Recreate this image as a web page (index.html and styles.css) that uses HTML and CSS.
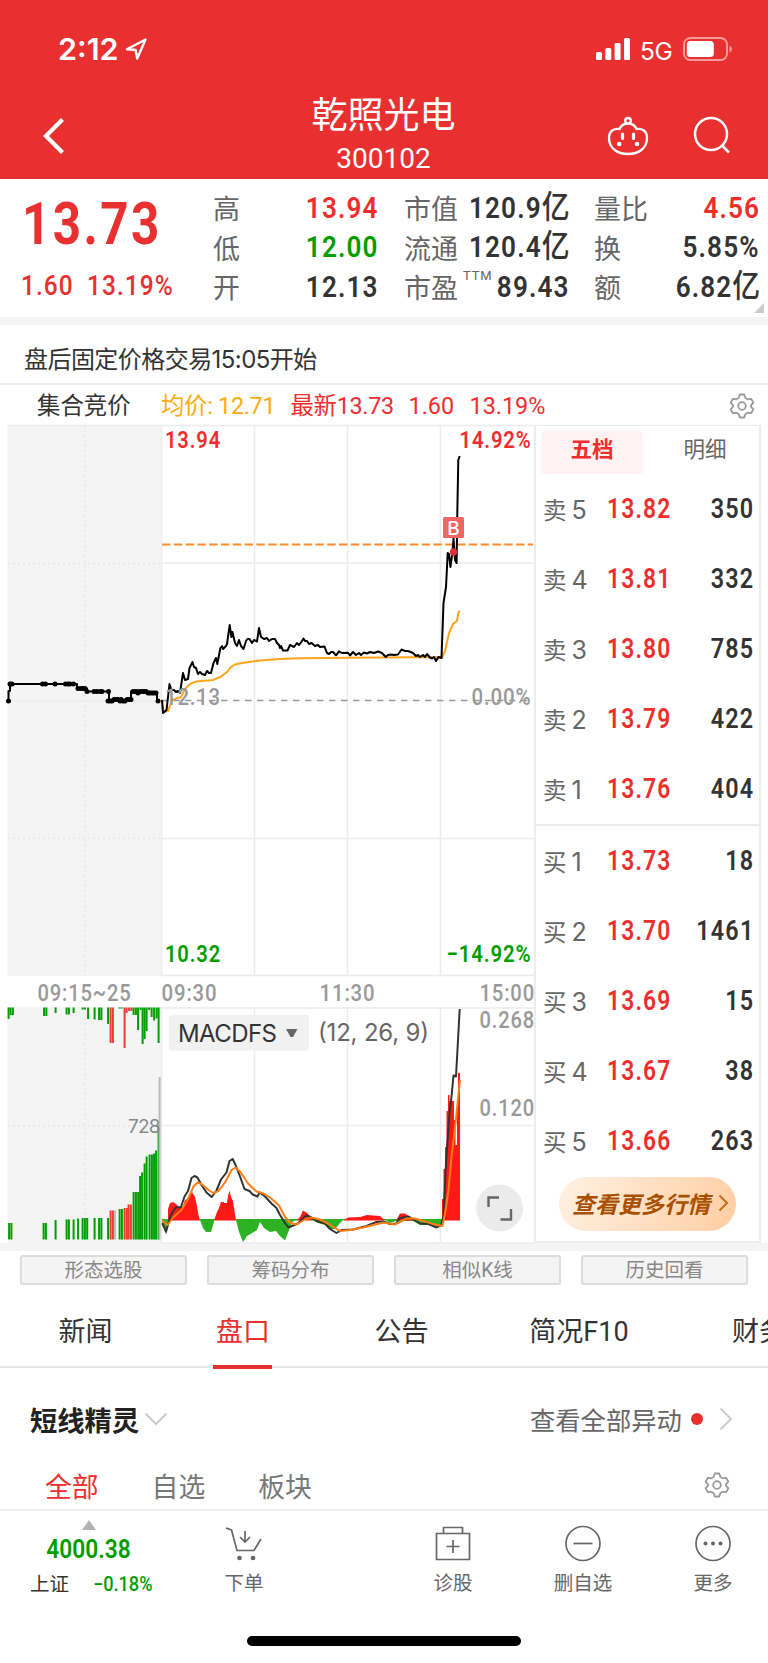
FILE: index.html
```html
<!DOCTYPE html>
<html lang="zh-CN">
<head>
  <meta charset="UTF-8">
  <title>乾照光电 300102</title>
  <link rel="stylesheet" href="styles.css">
</head>
<body>
  <!-- Header -->
  <header class="header">
    <div class="status-bar">
      <div class="status-left">
        <span class="clock">2:12</span>
        <svg width="22" height="22" viewBox="0 0 22 22"><path d="M20.500 1.500L2 11.200L10.700 12L12.200 20.500Z" fill="none" stroke="#fff" stroke-width="2.400" stroke-linejoin="round"/></svg>
      </div>
      <div class="status-right">
        <svg width="35" height="22" viewBox="0 0 35 22" fill="#fff"><rect x="0" y="14" width="6" height="8" rx="1.5"/><rect x="9.3" y="10" width="6" height="12" rx="1.5"/><rect x="18.6" y="5" width="6" height="17" rx="1.5"/><rect x="28" y="0" width="6" height="22" rx="1.5"/></svg>
        <span class="network">5G</span>
        <svg width="50" height="24" viewBox="0 0 50 24"><rect x="1" y="1" width="43" height="22" rx="6.5" fill="none" stroke="#f59a9a" stroke-width="2"/><rect x="3.8" y="4" width="27" height="16" rx="3.5" fill="#fff"/><path d="M46.5 8.5Q49 9.5 49 12T46.5 15.5Z" fill="#f59a9a"/></svg>
      </div>
    </div>
    <div class="nav-bar">
      <svg class="back" width="22" height="36" viewBox="0 0 22 36"><path d="M19.500 1.500L3 18L19.500 34.500" fill="none" stroke="#fff" stroke-width="4.200"/></svg>
      <div class="stock-title">
        <h1>乾照光电</h1>
        <p>300102</p>
      </div>
      <div class="nav-icons">
        <svg width="42" height="40" viewBox="0 0 42 40" fill="none" stroke="#fff" stroke-width="2.300">
          <circle cx="21" cy="4.800" r="2.800"/>
          <path d="M21 7.500C17 7.500 14 9.500 12.500 13C7 12 2 15 2 22C2 32 10 38 21 38S40 32 40 22C40 15 35 12 29.500 13C28 9.500 25 7.500 21 7.500Z"/>
          <path d="M15.500 18V22.500M26.500 18V22.500" stroke-width="3.200" stroke-linecap="round"/>
          <g fill="#fff" stroke="none"><circle cx="12.200" cy="28" r="2.300"/><circle cx="30" cy="28" r="2.300"/></g>
        </svg>
        <svg width="38" height="38" viewBox="0 0 38 38" fill="none" stroke="#fff" stroke-width="2.500"><circle cx="18" cy="18" r="16"/><path d="M28.500 29L36 36.500"/></svg>
      </div>
    </div>
  </header>

  <!-- Quote summary -->
  <section class="quote">
    <div class="quote-main">
      <div class="last-price"><span>13.73</span></div>
      <div class="change"><span>1.60</span><span>13.19%</span></div>
    </div>
    <dl class="stats stats-a">
      <div><dt>高</dt><dd class="up">13.94</dd></div>
      <div><dt>低</dt><dd class="down">12.00</dd></div>
      <div><dt>开</dt><dd>12.13</dd></div>
    </dl>
    <dl class="stats stats-b">
      <div><dt>市值</dt><dd>120.9<i>亿</i></dd></div>
      <div><dt>流通</dt><dd>120.4<i>亿</i></dd></div>
      <div><dt>市盈<sup>TTM</sup></dt><dd>89.43</dd></div>
    </dl>
    <dl class="stats stats-c">
      <div><dt>量比</dt><dd class="up">4.56</dd></div>
      <div><dt>换</dt><dd>5.85%</dd></div>
      <div><dt>额</dt><dd>6.82<i>亿</i></dd></div>
    </dl>
    <div class="corner"></div>
  </section>
  <div class="notice">盘后固定价格交易15:05开始</div>

  <!-- Chart legend -->
  <div class="legend">
    <span class="auction">集合竞价</span>
    <span class="avg">均价: 12.71</span>
    <span class="latest">最新13.73</span>
    <span class="diff">1.60</span>
    <span class="pct">13.19%</span>
    <svg class="gear" width="26" height="26" viewBox="0 0 26 26"><use href="#gear"/></svg>
  </div>

  <!-- Charts and order book -->
  <main class="trade">
    <svg class="chart" width="534" height="819" viewBox="0 425 534 819">
      <rect x="7.500" y="425" width="153.500" height="551" fill="#f4f4f4"/>
      <rect x="7.500" y="1007" width="153.500" height="237" fill="#f4f4f4"/>
      <g class="grid">
        <path d="M7.500 425.500H534M161 563H534M161 838.500H534M161 975.500H534M161 1008H534M161 1125.500H534M161 1243H534"/>
        <path d="M161.500 425V976M254.500 425V976M347.500 425V976M440.500 425V976M161.500 1008V1243M254.500 1008V1243M347.500 1008V1243M440.500 1008V1243"/>
        <path class="dotted" d="M85 425V976M85 1008V1243M8 563.500H161M8 838.500H161M8 1126H161"/>
        <path d="M8 701H161"/>
      </g>

      <!-- Auction bars, filled in by script.js -->
      <g id="auctionBars"></g>
      <g id="auctionDots"></g>
      <path class="auction-line" d="M8.500 701V691H10V684H77V688.500H87V691.500H109V701H114L118 699.500L125 701L131 699.500V691.500H147L157 693V701"/>

      <!-- Intraday price -->
      <path d="M162 544.500H533" stroke="#ff8a2b" stroke-width="2.200" stroke-dasharray="8.500 3.300"/>
      <path d="M161 700.500H533" stroke="#999" stroke-width="1.300" stroke-dasharray="6.500 5.500"/>
      <polyline class="avg-line" points="162,700 163.500,712 168,711 172,700 181,697 185,689 190,684 196,681.500 213,680 220,677 227,672 231,667 235,664.500 242,663 260,660.500 280,659 300,658.300 350,657.800 440,657 442,657.500 445,651 449,633 453,624 457,621 458.500,612 460,611"/>
      <polyline class="price-line" points="162,700 163,713 166.500,710 169.500,684 171.500,690 174,690 176,692 178,691 180,693 183,673 185,680 188,679 189.500,668 192.500,662 194,667 196,668 198,674 200,672 202,674 205,675 207,671 209,673 211,673 213.500,663 216,658 217.300,664 220.400,648 222,646 223,649 226,646 227,644 229.700,625 231.400,637 232.400,632 235,643 237,646 239,640 241,646 243.500,649 246,641 247.500,639 249.500,639 252,643 254,640 257,641.500 259,628 261,637 264,639 267,638 269,641 272,639 275,639 277,643 279,645 280,648 281,646 283,650.500 287.500,650.500 290,645 292,646 294,647 297,643 299,645 302,641 303.500,638.500 305,641 307,641 309,644 311.600,643 315,646 318,645 320,647 324.500,646.500 327,653 329,654 331,652 333,652 336,655.300 339,651.300 342,653 348,652.700 350,655.500 353,652 356,655 359,653 361,655 364,652.500 367,653.500 370,652 374,653 378,651.500 382,653 385.700,657 388,655 391,654.500 394,655 398,654.500 401.500,649.500 405,651 408,651 413,653 416,656 418,655 420,657 423,655 425,657 427,654 430,657.500 432,658.500 434,657 436,661 438.500,657 441.500,658 443.500,603 446,587 447.700,553 449,554 450.400,567 452.500,552 453.500,538 455,560 456.600,563 457.300,513 458.300,460 459.700,456"/>
      <rect x="443" y="517" width="21" height="21" rx="1.500" fill="#f06464"/>
      <text x="453.500" y="535" class="mark" text-anchor="middle">B</text>
      <circle cx="453.500" cy="552" r="3.700" fill="#e02e3a"/>

      <g class="axis up">
        <text x="165" y="448" textLength="56" lengthAdjust="spacingAndGlyphs">13.94</text>
        <text x="459.500" y="448" textLength="72" lengthAdjust="spacingAndGlyphs">14.92%</text>
      </g>
      <g class="axis down">
        <text x="165" y="961.500" textLength="56" lengthAdjust="spacingAndGlyphs">10.32</text>
        <text x="446.500" y="961.500" textLength="85" lengthAdjust="spacingAndGlyphs">−14.92%</text>
      </g>
      <g class="axis muted">
        <text x="165" y="705" textLength="56" lengthAdjust="spacingAndGlyphs">12.13</text>
        <text x="471.500" y="705" textLength="60" lengthAdjust="spacingAndGlyphs">0.00%</text>
        <text x="37.500" y="1001" textLength="94" lengthAdjust="spacingAndGlyphs">09:15~25</text>
        <text x="161.500" y="1001" textLength="56" lengthAdjust="spacingAndGlyphs">09:30</text>
        <text x="319.500" y="1001" textLength="56" lengthAdjust="spacingAndGlyphs">11:30</text>
        <text x="479.500" y="1001" textLength="55.500" lengthAdjust="spacingAndGlyphs">15:00</text>
        <text x="479.500" y="1027.500" textLength="55.500" lengthAdjust="spacingAndGlyphs">0.268</text>
        <text x="479.500" y="1116" textLength="55.500" lengthAdjust="spacingAndGlyphs">0.120</text>
      </g>
      <text x="128" y="1133" class="volume-label">728</text>

      <!-- MACD -->
      <path fill="#2db224" d="M162 1220L166 1235L168 1225L170 1220H200L203 1228L206 1232H211L214 1222V1220H236L239 1232L243 1242L247 1236L252 1233L257 1230L260 1222L264 1228L270 1232L276 1231L280 1236L285 1240.500L289 1230L292 1222L297 1220H312L318 1223L325 1225L330 1229H335L340 1223L343 1220H385L390 1223L396 1221H413L420 1225H430L438 1228L442 1226V1219H162Z"/>
      <path fill="#ff1a17" d="M168 1220.500V1209L170 1203L173 1202L176 1204L180 1208L183 1206L185 1200L187 1199L192 1192L195 1197L197 1206L198 1213L200 1220.500ZM214 1220.500L217 1212L219 1208L221 1202H224V1203H227L228 1196L229.500 1190.500L231 1197L233 1201L235 1214L236 1220.500ZM296 1220.500L300 1217L303 1210.500L307 1213L311 1217L313 1220.500ZM343 1220.500L348 1217.500L360 1217L367 1215L380 1216L385 1220.500ZM396 1220.500L400 1213.500H405L410 1217L413 1220.500ZM442 1220.500V1199H443.500V1169H445V1147H446.500V1111H448V1095H449.500V1101H454V1120H455.500V1145H457V1097H458V1073H460V1220.500Z"/>
      <polyline class="dif" points="162.300,1223 166,1231.700 168.500,1223 171,1215 175.500,1207.500 181,1207 184.500,1196.500 188,1191 191.500,1178 194.500,1176 197.500,1177.500 201.500,1185 206.500,1192.500 211.700,1197 216.500,1190.500 221,1179.500 226.500,1172.500 229.500,1161 232.700,1159 235.500,1165 239.500,1175 244.500,1189 249.500,1191 252.700,1194.500 257.500,1196.500 259.500,1192.500 265,1196.500 271.500,1203.500 276.500,1208 280,1215 285,1223 288.500,1227.500 292,1226 298,1223.500 303.500,1217.500 306.500,1215.500 311.500,1217.500 316.500,1221 325,1223.500 330,1229 336.500,1233 341.500,1230 353,1229.500 366.500,1226 376.500,1222 383.500,1221.500 390,1224 396,1223.500 400,1218 408,1216.500 413.500,1219.500 420,1223.500 428.500,1224 436.500,1227.500 441,1225 443.500,1216.500 446,1163 449.500,1113 451.500,1096.500 453.500,1075.500 456,1076.500 457.300,1053 459.700,1009"/>
      <polyline class="dea" points="162.300,1220.500 167.500,1225 173.500,1217 181.500,1210 187.500,1200 193.500,1186.500 197.500,1182.500 201.500,1184 208.500,1190 213.500,1193 218.500,1191 225,1182.500 231.500,1170 235.500,1167.500 240,1171.500 248.500,1184 256.500,1191.500 263.500,1193.500 270,1197.500 279,1205.500 285,1217 290.500,1223 296.500,1224.500 305,1219.500 311.500,1217.500 320,1219.500 328,1223.500 340,1231 350,1230 363,1227.500 383.500,1222.500 395,1224.500 406.500,1218.500 415,1218.500 428.500,1222.500 436.500,1225 442.500,1226 445,1213.500 448.500,1190 451.500,1156.500 455.500,1123.500 458.500,1093.500 460,1080"/>
      <rect x="169" y="1015" width="140" height="35.500" rx="3" fill="#f1f1f1"/>
      <text x="178" y="1042" class="indicator" textLength="99">MACDFS</text>
      <path d="M286 1029H297.500L293 1037H290.500Z" fill="#666"/>
      <text x="318" y="1041" class="indicator params" textLength="111">(12, 26, 9)</text>
      <circle cx="499.500" cy="1208" r="23.500" fill="#ebebeb"/>
      <path d="M488.500 1207V1197.500H499M500.500 1219.500H511V1209" fill="none" stroke="#666" stroke-width="2.400"/>
    </svg>

    <aside class="book">
      <div class="book-tabs"><span class="active">五档</span><span>明细</span></div>
      <ul class="asks">
        <li><span>卖<b>5</b></span><em>13.82</em><strong>350</strong></li>
        <li><span>卖<b>4</b></span><em>13.81</em><strong>332</strong></li>
        <li><span>卖<b>3</b></span><em>13.80</em><strong>785</strong></li>
        <li><span>卖<b>2</b></span><em>13.79</em><strong>422</strong></li>
        <li><span>卖<b>1</b></span><em>13.76</em><strong>404</strong></li>
      </ul>
      <ul class="bids">
        <li><span>买<b>1</b></span><em>13.73</em><strong>18</strong></li>
        <li><span>买<b>2</b></span><em>13.70</em><strong>1461</strong></li>
        <li><span>买<b>3</b></span><em>13.69</em><strong>15</strong></li>
        <li><span>买<b>4</b></span><em>13.67</em><strong>38</strong></li>
        <li><span>买<b>5</b></span><em>13.66</em><strong>263</strong></li>
      </ul>
      <div class="more-quotes">
        <span>查看更多行情</span>
        <svg width="11" height="18" viewBox="0 0 11 18"><path d="M1.500 1.500L9 9L1.500 16.500" fill="none" stroke="#c0701f" stroke-width="2"/></svg>
      </div>
    </aside>
  </main>

  <!-- Tools -->
  <div class="tools">
    <span>形态选股</span><span>筹码分布</span><span>相似K线</span><span>历史回看</span>
  </div>

  <nav class="tabs">
    <span>新闻</span><span class="active">盘口</span><span>公告</span><span>简况F10</span><span>财务</span>
  </nav>

  <section class="alerts">
    <div class="alerts-head">
      <h2>短线精灵</h2>
      <svg width="24" height="14" viewBox="0 0 24 14"><path d="M1.500 1.500L12 12L22.500 1.500" fill="none" stroke="#ccc" stroke-width="2"/></svg>
      <span class="view-all">查看全部异动</span>
      <i class="dot"></i>
      <svg width="14" height="24" viewBox="0 0 14 24"><path d="M1.500 1.500L12 12L1.500 22.500" fill="none" stroke="#ccc" stroke-width="2"/></svg>
    </div>
    <div class="filters">
      <span class="active">全部</span><span>自选</span><span>板块</span>
      <svg class="gear" width="26" height="26" viewBox="0 0 26 26">
        <g id="gear" fill="none" stroke="#999" stroke-width="1.800" stroke-linejoin="round">
          <path d="M10.800 1.500H15.200L16.400 5Q17.500 5.600 18.600 6.300L22.100 5.800L24.300 9.600L22 12.300V13.700L24.300 16.400L22.100 20.200L18.600 19.700Q17.500 20.400 16.400 21L15.200 24.500H10.800L9.600 21Q8.500 20.400 7.400 19.700L3.900 20.200L1.700 16.400L4 13.700V12.300L1.700 9.600L3.900 5.800L7.400 6.300Q8.500 5.600 9.600 5Z"/>
          <circle cx="13" cy="13" r="3.800"/>
        </g>
      </svg>
    </div>
  </section>

  <!-- Bottom bar -->
  <footer class="bottom-bar">
    <div class="index">
      <i class="arrow-up"></i>
      <div class="index-value">4000.38</div>
      <div class="index-row"><span>上证</span><span class="down">−0.18%</span></div>
    </div>
    <div class="action order">
      <svg width="38" height="38" viewBox="0 0 38 38"><path d="M1 3L6.500 5L12 25.500H29L36 14M20 6V16M15 12L20 17L25 12"/><g fill="#666" stroke="none"><circle cx="14.500" cy="33" r="2.300"/><circle cx="28" cy="33" r="2.300"/></g></svg>
      <span>下单</span>
    </div>
    <div class="action diagnose">
      <svg width="38" height="38" viewBox="0 0 38 38"><path d="M2.500 8.500H35.500V34.500H2.500ZM9.500 8.500V2.500H28.500V8.500M19 15V28M12.500 21.500H25.500"/></svg>
      <span>诊股</span>
    </div>
    <div class="action remove">
      <svg width="38" height="38" viewBox="0 0 38 38"><circle cx="19" cy="18.500" r="17"/><path d="M9.500 18.500H28.500"/></svg>
      <span>删自选</span>
    </div>
    <div class="action more">
      <svg width="38" height="38" viewBox="0 0 38 38"><circle cx="19" cy="18.500" r="17"/><g fill="#666" stroke="none"><circle cx="11.500" cy="18.500" r="2"/><circle cx="19" cy="18.500" r="2"/><circle cx="26.500" cy="18.500" r="2"/></g></svg>
      <span>更多</span>
    </div>
  </footer>
  <div class="home-indicator"></div>
  <script src="script.js"></script>
</body>
</html>
```

FILE: styles.css
```css
/* Global Settings */
* { margin: 0; padding: 0; box-sizing: border-box; }
body {
  width: 768px;
  height: 1663px;
  overflow: hidden;
  background: #fff;
  color: #333;
  font-family: Roboto, "Noto Sans CJK SC", sans-serif;
}
svg { display: block; flex-shrink: 0; }
ul { list-style: none; }
i, em { font-style: normal; }
.up { color: #f02d2d; fill: #f02d2d; }
.down { color: #009d00; fill: #009d00; }

/* ----------------- Header ----------------- */
.header {
  height: 179px;
  background: #e93030;
  color: #fff;
}
.status-bar {
  height: 98px;
  padding: 0 35px 0 58px;
  display: flex;
  align-items: center;
  justify-content: space-between;
}
.status-left, .status-right { display: flex; align-items: center; }
.status-left { gap: 5px; }
.clock { font: 600 30.5px/36px Inter, sans-serif; width: 62px; }
.network { font: 400 24.5px/30px Inter, sans-serif; width: 32px; margin: 3px 11px 0 9px; letter-spacing: -0.5px; }
.nav-bar {
  height: 81px;
  padding: 0 37px 0 43px;
  display: grid;
  grid-template-columns: 117px 1fr 124px;
}
.back { margin-top: 20px; }
.stock-title { text-align: center; }
.stock-title h1 { font-size: 36px; font-weight: 400; line-height: 36px; }
.stock-title p { font-size: 28px; line-height: 32px; margin-top: 9px; }
.nav-icons { display: flex; justify-content: space-between; padding-top: 18px; }

/* ----------------- Quote ----------------- */
.quote {
  position: relative;
  height: 146px;
  border-bottom: 8px solid #f4f4f4;
  display: flex;
  padding-top: 8px;
}
.quote-main { width: 213px; color: #e93030; }
.last-price {
  height: 81px;
  padding: 7px 0 0 22px;
  font-size: 59px;
  font-weight: 700;
  line-height: 60px;
  letter-spacing: 3px;
}
.last-price span { display: inline-block; transform: scaleX(0.835); transform-origin: left; }
.change {
  display: flex;
  gap: 7px;
  padding-left: 21px;
  font-size: 27.5px;
  font-weight: 500;
  line-height: 36px;
  letter-spacing: 1.2px;
}
.change span { transform: scaleX(0.89); transform-origin: left; }
.stats div {
  height: 39.5px;
  display: flex;
  justify-content: space-between;
  align-items: center;
}
.stats dt { position: relative; top: 1px; font-size: 27px; color: #666; white-space: nowrap; }
.stats dd {
  position: relative;
  top: 0.5px;
  margin-right: -1px;
  font-size: 30px;
  font-weight: 600;
  letter-spacing: 1.3px;
  white-space: nowrap;
  transform: scaleX(0.87);
  transform-origin: right;
}
/* no room to spare beside the label in the middle column */
.stats-b dd { margin-left: -14px; }
.stats dd i { font-size: 32px; font-weight: 500; line-height: 30px; letter-spacing: 0; }
.stats sup { position: absolute; left: 59px; top: 1px; font-size: 13px; letter-spacing: 0.8px; }
.stats-a { width: 165px; margin-right: 26px; }
.stats-b { width: 165px; margin-right: 25px; }
.stats-c { width: 165px; }
.corner {
  position: absolute;
  right: 4px;
  bottom: 4px;
  border-left: 10px solid transparent;
  border-bottom: 10px solid #ccc;
}
.notice {
  height: 60px;
  padding-left: 24px;
  border-bottom: 2px solid #eee;
  font: 24px/70px Inter, "Noto Sans CJK SC", sans-serif;
  letter-spacing: -0.55px;
}

/* ----------------- Chart legend ----------------- */
.legend {
  height: 40px;
  display: flex;
  align-items: center;
  padding: 2px 13px 0 37px;
  font-size: 23.4px;
  line-height: 36px;
  color: #f02d2d;
  white-space: nowrap;
}
.legend .auction { width: 124px; color: #333; }
.legend .avg { width: 129.5px; color: #ffab0f; letter-spacing: -0.3px; }
.legend .latest { width: 118px; letter-spacing: -0.3px; }
.legend .diff { width: 61px; }
.legend .gear { margin-left: auto; }

/* ----------------- Charts ----------------- */
.trade { height: 818px; display: flex; }
.chart { overflow: visible; }
.grid path { fill: none; stroke: #ececec; stroke-width: 1.5; }
.grid .dotted { stroke: #e6e6e6; stroke-dasharray: 2 3; }
.auction-line, .price-line { fill: none; stroke: #000; stroke-width: 2; stroke-linejoin: round; }
.avg-line { fill: none; stroke: #ffa41c; stroke-width: 2; }
.dif { fill: none; stroke: #333; stroke-width: 2; stroke-linejoin: round; }
.dea { fill: none; stroke: #ff7d12; stroke-width: 2; stroke-linejoin: round; }
.axis { font: 500 24px Roboto, sans-serif; letter-spacing: 1px; }
.axis.up, .axis.down { font-weight: 600; }
.muted { fill: #999; }
.mark { font: 500 19px Inter, sans-serif; fill: #fff; }
.volume-label { font: 19px Inter, sans-serif; fill: #888; letter-spacing: -0.8px; }
.indicator { font: 24px Inter, sans-serif; fill: #333; }
.params { fill: #666; }

/* ----------------- Order book ----------------- */
.book {
  width: 227px;
  border: 2px solid #ececec;
  border-top-width: 1px;
}
.book-tabs {
  height: 48px;
  padding: 5px 0 0 5px;
  display: flex;
  font-size: 21.5px;
  line-height: 37px;
  text-align: center;
  color: #666;
}
.book-tabs span { width: 102px; border-radius: 4px; flex-shrink: 0; }
.book-tabs span + span { width: 116px; padding-left: 8px; }
.book-tabs .active { background: #fff2f2; color: #f02d2d; font-weight: 700; }
.asks { height: 352px; border-bottom: 2px solid #ececec; }
.book li {
  height: 70px;
  padding: 0 5px 1px 7px;
  display: flex;
  align-items: center;
}
.book li span { width: 64px; font-size: 23.5px; color: #666; white-space: nowrap; }
.book b { font: 400 25px Inter, sans-serif; margin-left: 5px; }
.book em { color: #f02d2d; }
.book em, .book strong {
  font-size: 27.5px;
  font-weight: 600;
  letter-spacing: 1.4px;
  transform: scaleX(0.83);
  transform-origin: left;
}
.book strong { margin-left: auto; transform: scaleX(0.85); transform-origin: right; }
.more-quotes {
  width: 177px;
  height: 54px;
  margin: 1px 0 0 23px;
  border-radius: 27px;
  background: linear-gradient(110deg, #fff1e2, #ffcda3);
  display: flex;
  align-items: center;
  padding: 0 0 2px 13px;
  gap: 5px;
  color: #a85000;
}
.more-quotes span { width: 141px; font-size: 23px; font-weight: 700; font-style: italic; white-space: nowrap; }

/* ----------------- Tools and tabs ----------------- */
.tools {
  height: 42px;
  border-top: 8px solid #f4f4f4;
  padding: 4px 20px 0;
  display: flex;
  justify-content: space-between;
}
.tools span {
  width: 167px;
  height: 30px;
  border: 2px solid #dcdcdc;
  border-radius: 3px;
  background: #f4f4f4;
  color: #888;
  font-size: 19.5px;
  line-height: 28px;
  text-align: center;
}
.tabs {
  height: 83px;
  padding-top: 12px;
  border-bottom: 2px solid #e8e8e8;
  display: grid;
  grid-template-columns: 171px 144px 173px 182px 98px;
  font-size: 27px;
  line-height: 70px;
  text-align: center;
}
.tabs .active { position: relative; color: #e93030; }
.tabs .active::after {
  content: "";
  position: absolute;
  left: 42px;
  bottom: -2px;
  width: 59px;
  height: 4px;
  background: #e93030;
}
.tabs span:last-child { overflow: hidden; white-space: nowrap; text-align: left; padding-left: 62px; }

/* ----------------- Alerts ----------------- */
.alerts { height: 143px; border-bottom: 2px solid #eee; }
.alerts-head {
  height: 102px;
  display: flex;
  align-items: center;
  padding-left: 30px;
}
.alerts-head h2 { width: 114px; font-size: 27.3px; font-weight: 700; color: #222; }
.view-all { width: 161px; margin-left: 362px; font-size: 25.3px; color: #666; }
.dot { width: 12px; height: 12px; margin-right: 16px; border-radius: 50%; background: #e93030; }
.filters {
  height: 30px;
  display: flex;
  align-items: center;
  gap: 53px;
  padding: 0 38px 0 45px;
  font-size: 26.8px;
  color: #777;
}
.filters .active { color: #f02d2d; }
.filters .gear { margin-left: auto; }

/* ----------------- Bottom bar ----------------- */
.bottom-bar {
  height: 125px;
  display: flex;
  font-size: 19.5px;
  color: #666;
}
.index { width: 177px; padding-top: 9px; text-align: center; }
.arrow-up {
  display: block;
  width: 0;
  margin: 0 auto;
  border: 7px solid transparent;
  border-top: 0;
  border-bottom: 10px solid #b3b3b3;
}
.index-value { color: #009d00; font-size: 25px; font-weight: 600; line-height: 39px; transform: scaleX(0.91); }
.index-row { display: flex; padding-left: 30px; gap: 24px; line-height: 32px; color: #333; }
.index-row .down { font-weight: 500; transform: scaleX(0.93); transform-origin: left; }
.action {
  width: 80px;
  display: flex;
  flex-direction: column;
  align-items: center;
  padding-top: 14px;
  line-height: 34px;
  gap: 4px;
}
.action svg { fill: none; stroke: #666; stroke-width: 1.7; }
.order { margin-left: 27px; }
.diagnose { margin-left: 129px; }
.remove { margin-left: 50px; }
.more { margin-left: 50px; }
.home-indicator { width: 274px; height: 10px; margin: 0 auto; border-radius: 5px; background: #000; }
```

FILE: script.js
```js
const ns = 'http://www.w3.org/2000/svg';
const colors = { g: '#009d00', r: '#f03a3a', n: '#bbb' };

// [from, to, y, colour], x range in chart pixels
const topBars = [
  [8, 9, 1019, 'g'], [10, 13, 1015, 'g'], [43.5, 46.5, 1016, 'g'], [55, 56, 1013, 'g'],
  [66, 69, 1014.5, 'g'], [73, 74, 1013, 'g'], [82, 86, 1009.5, 'g'], [87.5, 89, 1019, 'g'],
  [94, 95, 1019.5, 'g'], [98.5, 102, 1020, 'g'], [107.5, 109, 1024, 'g'], [110, 113.5, 1043, 'r'],
  [119, 122, 1008.5, 'g'], [124, 125, 1048, 'r'], [126, 128, 1013, 'r'], [128.5, 132, 1011, 'r'],
  [133, 136.5, 1015, 'g'], [137.5, 139, 1030, 'g'], [140, 141, 1010, 'g'], [142, 143, 1044, 'g'],
  [144, 145, 1039, 'g'], [146, 147.5, 1031, 'g'], [148.5, 150, 1010, 'g'], [151, 152.5, 1017, 'g'],
  [153.5, 155, 1020.5, 'g'], [156, 157, 1018.5, 'g'], [158, 159, 1043, 'g']
];
const bottomBars = [
  [8.5, 13, 1223, 'g'], [43, 47, 1223, 'g'], [55, 56, 1220, 'g'], [66, 69.5, 1219.5, 'g'],
  [73, 74, 1219.5, 'g'], [77.5, 78.5, 1218.5, 'g'], [82, 88.5, 1218, 'g'], [94, 95, 1218, 'g'],
  [98.5, 102, 1218, 'g'], [107.5, 109, 1218, 'g'], [110, 113.5, 1210.5, 'r'], [114.5, 116, 1210.5, 'n'],
  [119, 122.5, 1209, 'g'], [124, 127, 1208, 'r'], [128, 132, 1204.5, 'r'], [133, 138.5, 1192, 'g'],
  [139.5, 140.5, 1176, 'g'], [141.5, 143, 1172.5, 'g'], [144, 145, 1163.5, 'g'], [146, 148, 1156.5, 'g'],
  [149, 152.5, 1154.5, 'g'], [153.5, 154.5, 1153.5, 'g'], [155.5, 157, 1150.5, 'g'],
  [158, 158.5, 1125, 'g'], [159, 160, 1077, 'n']
];

function drawBars(list, base) {
  list.forEach(([from, to, y, c]) => {
    for (let x = from; x < to; x += 2.3) {
      const bar = document.createElementNS(ns, 'rect');
      bar.setAttribute('x', x - 0.4);
      bar.setAttribute('y', Math.min(y, base));
      bar.setAttribute('width', 2);
      bar.setAttribute('height', Math.abs(base - y));
      bar.setAttribute('fill', colors[c]);
      document.getElementById('auctionBars').appendChild(bar);
    }
  });
}
drawBars(topBars, 1007.5);
drawBars(bottomBars, 1239.5);

// Matched prices in the call auction
const dots = {
  701: [8.5, 108, 110, 112, 120, 123, 125, 158],
  699.5: [114, 116, 118, 121, 127, 129, 131],
  684: [10, 12, 42.5, 45.5, 55, 65.5, 68, 70, 73.5],
  688.5: [78, 81, 83, 85],
  691.5: [87, 94, 97, 100, 102, 108.5, 133, 135, 137, 140, 142, 144, 146],
  693: [138, 148, 150, 152, 154, 156]
};
Object.keys(dots).forEach(y => {
  dots[y].forEach(x => {
    const dot = document.createElementNS(ns, 'circle');
    dot.setAttribute('cx', x);
    dot.setAttribute('cy', y);
    dot.setAttribute('r', 2.5);
    document.getElementById('auctionDots').appendChild(dot);
  });
});
```
